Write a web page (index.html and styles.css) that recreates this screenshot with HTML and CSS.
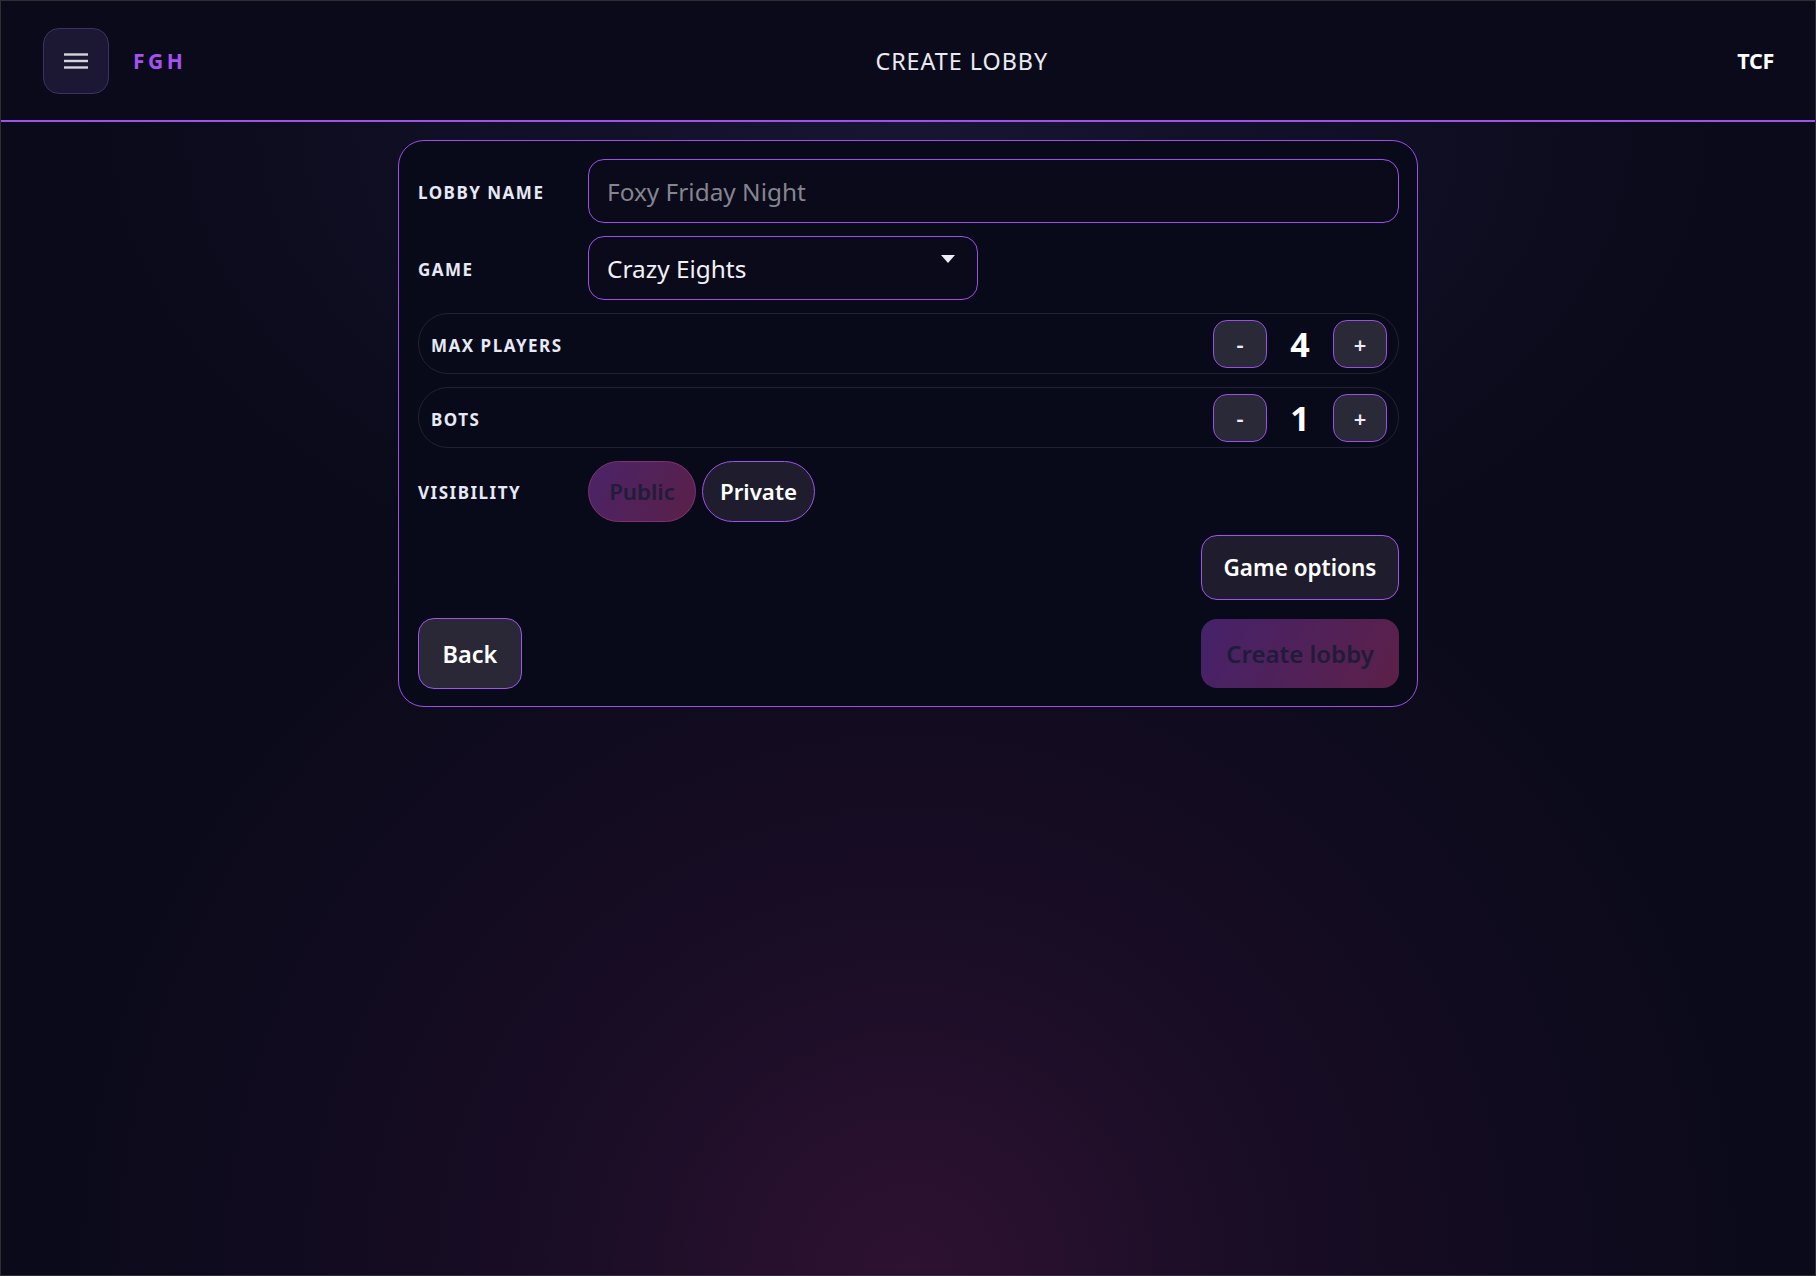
FILE: index.html
```html
<!DOCTYPE html>
<html lang="en">
<head>
<meta charset="utf-8">
<title>Create Lobby</title>
<link rel="stylesheet" href="styles.css">
</head>
<body>
<div class="app">
  <header class="topbar">
    <div class="brand-group">
      <button class="menu-btn" aria-label="Menu">
        <svg width="24" height="18" viewBox="0 0 24 18"><g stroke="#d4d4de" stroke-width="2.4" stroke-linecap="butt"><line x1="0" y1="2.5" x2="24" y2="2.5"/><line x1="0" y1="9" x2="24" y2="9"/><line x1="0" y1="15.5" x2="24" y2="15.5"/></g></svg>
      </button>
      <span class="brand">FGH</span>
    </div>
    <h1 class="page-title">CREATE LOBBY</h1>
    <span class="user">TCF</span>
  </header>
  <main class="main">
    <section class="card">
      <div class="field">
        <label class="label">LOBBY NAME</label>
        <div class="input"><span class="placeholder">Foxy Friday Night</span></div>
      </div>
      <div class="field">
        <label class="label">GAME</label>
        <div class="select"><span>Crazy Eights</span><span class="caret"></span></div>
      </div>
      <div class="stepper-row">
        <span class="label">MAX PLAYERS</span>
        <div class="stepper">
          <button class="step-btn">-</button>
          <span class="step-val">4</span>
          <button class="step-btn">+</button>
        </div>
      </div>
      <div class="stepper-row">
        <span class="label">BOTS</span>
        <div class="stepper">
          <button class="step-btn">-</button>
          <span class="step-val">1</span>
          <button class="step-btn">+</button>
        </div>
      </div>
      <div class="field">
        <span class="label">VISIBILITY</span>
        <div class="pills">
          <button class="pill pill-active">Public</button>
          <button class="pill">Private</button>
        </div>
      </div>
      <div class="options-row">
        <button class="btn btn-options">Game options</button>
      </div>
      <div class="actions">
        <button class="btn btn-back">Back</button>
        <button class="btn btn-create">Create lobby</button>
      </div>
    </section>
  </main>
</div>
</body>
</html>
```
FILE: styles.css
```css
* { box-sizing: border-box; }
html, body { margin: 0; padding: 0; height: 100%; }
body {
  background: #0a0a1a;
  font-family: "Noto Sans", "Open Sans", sans-serif;
  color: #eef0f8;
}
.app {
  height: 1276px;
  border: 1px solid #2e2e34;
  display: flex;
  flex-direction: column;
  background: #0a0a1a;
}
.topbar {
  height: 121px;
  flex: none;
  display: flex;
  align-items: center;
  justify-content: space-between;
  padding: 0 41px 0 42px;
  border-bottom: 2px solid #a052ee;
  background: #0a0a1a;
}
.brand-group { display: flex; align-items: center; gap: 24px; }
.menu-btn {
  width: 66px; height: 66px;
  border-radius: 16px;
  background: #1c1834;
  border: 1px solid #3a3264;
  display: flex; align-items: center; justify-content: center;
  padding: 0;
}
.brand {
  color: #a452f0;
  font-weight: 700;
  font-size: 21px;
  letter-spacing: 3.5px;
}
.page-title {
  margin: 0;
  font-weight: 400;
  font-size: 23.3px;
  letter-spacing: 1px;
  color: #e9eaf2;
}
.user {
  font-weight: 700;
  font-size: 21.5px;
  color: #ffffff;
  letter-spacing: -0.3px;
}
.main {
  flex: 1;
  background:
    radial-gradient(ellipse 48% 75% at 50% 100%, rgba(58, 20, 58, 0.75) 0%, rgba(40, 15, 48, 0.45) 45%, rgba(20, 10, 30, 0) 100%),
    radial-gradient(ellipse 45% 45% at 50% 0%, rgba(34, 30, 70, 0.55) 0%, rgba(20, 18, 45, 0) 100%),
    #0a0a1a;
  padding-top: 18px;
  display: flex;
  justify-content: center;
  align-items: flex-start;
}
.card {
  width: 1020px;
  background: #090a19;
  border: 1px solid #9d4ee8;
  border-radius: 26px;
  padding: 18px 18px 17px 19px;
  display: flex;
  flex-direction: column;
  gap: 13px;
}
.field {
  display: flex;
  align-items: center;
}
.label {
  width: 170px;
  flex: none;
  font-weight: 700;
  font-size: 17px;
  letter-spacing: 1.5px;
  color: #e6e9f6;
  padding-top: 2px;
}
.input, .select {
  height: 64px;
  border: 1px solid #9d4ee8;
  border-radius: 16px;
  background: #0a0a1a;
  display: flex;
  align-items: center;
  padding: 0 18px;
  font-size: 24.4px;
}
.input { flex: 1; }
.placeholder { color: #85858f; }
.select {
  width: 390px;
  justify-content: space-between;
  color: #f2f2f8;
  position: relative;
}
.caret {
  width: 0; height: 0;
  border-left: 7.5px solid transparent;
  border-right: 7.5px solid transparent;
  border-top: 8px solid #eceef6;
  margin-right: 4px;
  margin-top: -18px;
}
.stepper-row {
  height: 61px;
  border: 1px solid #222133;
  border-radius: 30px;
  display: flex;
  align-items: center;
  justify-content: space-between;
  padding: 0 11px 0 12px;
}
.stepper-row .label { width: auto; padding-top: 4px; }
.stepper {
  display: flex;
  align-items: center;
  gap: 13px;
}
.step-btn {
  width: 54px; height: 48px;
  border-radius: 14px;
  background: #2a2937;
  border: 1.5px solid #9a4fe6;
  color: #eceef6;
  font-family: inherit;
  font-size: 22px;
  font-weight: 600;
  padding: 0;
  display: flex; align-items: center; justify-content: center;
}
.step-val {
  width: 40px;
  text-align: center;
  font-weight: 700;
  font-size: 34px;
  color: #ffffff;
}
.pills { display: flex; gap: 6px; }
.pill {
  height: 61px;
  border-radius: 31px;
  font-family: inherit;
  font-size: 22.3px;
  font-weight: 600;
  padding: 0;
  background: #1e1c2d;
  border: 1.5px solid #a052ee;
  color: #ffffff;
}
.pill-active {
  width: 108px;
  background: linear-gradient(120deg, #4a2368 0%, #5a2048 100%);
  border: 1px solid #803070;
  color: #1f1d3a;
}
.pill:not(.pill-active) { width: 113px; }
.options-row { display: flex; justify-content: flex-end; }
.actions {
  display: flex;
  justify-content: space-between;
  align-items: center;
  margin-top: 5px;
}
.btn {
  font-family: inherit;
  font-weight: 600;
  border-radius: 16px;
  color: #ffffff;
  padding: 0;
}
.btn-options {
  width: 198px; height: 65px;
  background: #1f1d2d;
  border: 1px solid #a052ee;
  font-size: 22.5px;
}
.btn-back {
  width: 104px; height: 71px;
  background: #2a2836;
  border: 1px solid #a052ee;
  font-size: 23.5px;
}
.btn-create {
  width: 198px; height: 69px;
  background: linear-gradient(120deg, #45226a 0%, #5c2048 100%);
  border: none;
  color: #1e1c38;
  font-size: 24px;
}
```
